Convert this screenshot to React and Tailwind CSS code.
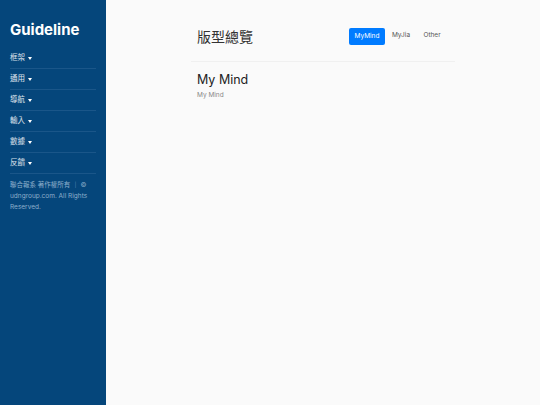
const navItems = ["框架", "通用", "導航", "輸入", "數據", "反饋"]

function Caret() {
  return <span className="inline-block ml-[3px] align-middle border-x-[2.5px] border-t-[3px] border-x-transparent border-t-white"></span>
}

export default function App() {
  return (
    <div className="flex w-[540px] h-[405px] bg-[#fafafa] font-[Inter,'Noto_Sans_CJK_TC',sans-serif]">
      <aside className="w-[106px] shrink-0 bg-[#05467b] px-[10px] pt-[20px]">
        <h1 className="text-[15px] font-bold text-white leading-[20px] mb-[8px]">Guideline</h1>
        <ul>
          {navItems.map((item) => (
            <li key={item} className="h-[21px] flex items-center border-b border-[#1a5689] text-[7.5px] text-white/85">
              {item}
              <Caret />
            </li>
          ))}
        </ul>
        <p className="mt-[6px] text-[6.5px] leading-[11px] text-[#8fb0cc]">
          聯合報系 著作權所有 ｜ © udngroup.com. All Rights Reserved.
        </p>
      </aside>
      <main className="flex-1">
        <div className="w-[264px] mx-auto pt-[25px]">
          <div className="flex items-center justify-between px-[6px] pb-[14px] border-b border-[#f0f0f0]">
            <h2 className="text-[14px] text-[#333] leading-[22px] font-['Noto_Sans_CJK_TC',sans-serif]">版型總覽</h2>
            <div className="flex items-center gap-[1px] text-[6.5px] text-[#555] mr-[2px]">
              <span className="bg-[#007bff] text-white rounded-[2px] w-[36px] text-center h-[17px] leading-[17px]">MyMind</span>
              <span className="w-[30px] text-center">MyJia</span>
              <span className="w-[30px] text-center">Other</span>
            </div>
          </div>
          <div className="px-[6px] pt-[10px]">
            <h3 className="text-[12.5px] text-[#222] leading-[16px]">My Mind</h3>
            <p className="mt-[3px] text-[6.5px] text-[#888]">My Mind</p>
          </div>
        </div>
      </main>
    </div>
  )
}
